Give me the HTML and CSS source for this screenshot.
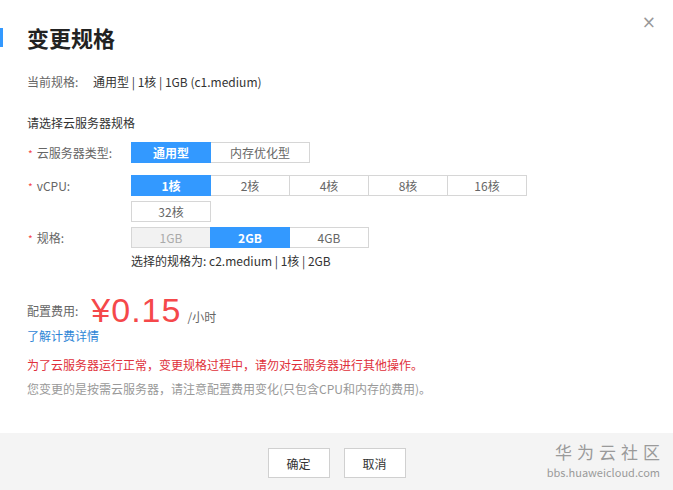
FILE: index.html
```html
<!DOCTYPE html>
<html lang="zh-CN">
<head>
  <meta charset="UTF-8">
  <title>变更规格</title>
  <link rel="stylesheet" href="styles.css">
</head>
<body>
<div class="dialog">
  <span class="close">&#215;</span>
  <div class="body">
    <h1 class="title">变更规格</h1>

    <div class="current">
      <span class="current-label">当前规格:</span>
      <span>通用型 | 1核 | 1GB (c1.medium)</span>
    </div>

    <div class="section">请选择云服务器规格</div>

    <div class="form">
      <div class="row">
        <div class="label"><i>*</i>云服务器类型:</div>
        <div class="opts">
          <span class="opt on">通用型</span>
          <span class="opt wide">内存优化型</span>
        </div>
      </div>

      <div class="row">
        <div class="label"><i>*</i>vCPU:</div>
        <div class="opts wrap">
          <span class="opt on">1核</span>
          <span class="opt">2核</span>
          <span class="opt">4核</span>
          <span class="opt">8核</span>
          <span class="opt">16核</span>
          <span class="opt">32核</span>
        </div>
      </div>

      <div class="row tight">
        <div class="label"><i>*</i>规格:</div>
        <div class="opts">
          <span class="opt off">1GB</span>
          <span class="opt on">2GB</span>
          <span class="opt">4GB</span>
        </div>
      </div>

      <div class="chosen">选择的规格为: c2.medium | 1核 | 2GB</div>
    </div>

    <div class="fee">
      <span class="fee-label">配置费用:</span>
      <span class="price">¥0.15</span>
      <span class="unit">/小时</span>
    </div>
    <a class="detail">了解计费详情</a>

    <p class="warn">为了云服务器运行正常，变更规格过程中，请勿对云服务器进行其他操作。</p>
    <p class="note">您变更的是按需云服务器，请注意配置费用变化(只包含CPU和内存的费用)。</p>
  </div>

  <div class="footer">
    <button class="btn">确定</button>
    <button class="btn">取消</button>
    <div class="mark">
      <div class="mark-cn">华为云社区</div>
      <div class="mark-en">bbs.huaweicloud.com</div>
    </div>
  </div>
</div>
</body>
</html>
```

FILE: styles.css
```css
body {
  margin: 0;
  background: #fff;
  font-family: "Noto Sans CJK SC", "Liberation Sans", sans-serif;
  font-size: 12px;
  color: #333;
}

.dialog {
  position: relative;
  width: 673px;
  height: 490px;
  display: flex;
  flex-direction: column;
  overflow: hidden;
}

.close {
  position: absolute;
  top: 12px;
  right: 17px;
  font-size: 17px;
  color: #999;
  font-family: "DejaVu Sans", sans-serif;
}

.body {
  flex: 1;
  padding: 26px 0 0 27px;
}

.title {
  position: relative;
  margin: 0;
  font-size: 22px;
  line-height: 22px;
  font-weight: bold;
  color: #222;
}

.title::before {
  content: '';
  position: absolute;
  left: -27px;
  top: 2px;
  width: 3px;
  height: 19px;
  background: #3399ff;
}

.current {
  margin-top: 26px;
  line-height: 16px;
  color: #333;
}

.current-label {
  color: #666;
  margin-right: 12px;
}

.section {
  margin-top: 25px;
  line-height: 16px;
}

.form {
  margin-top: 11px;
}

.row {
  display: flex;
  align-items: flex-start;
  margin-bottom: 11px;
}

.row.tight {
  margin-top: -6px;
  margin-bottom: 4px;
}

.label {
  width: 104px;
  flex: none;
  line-height: 21px;
  color: #666;
}

.label i {
  font-style: normal;
  color: #f5484a;
  font-size: 10px;
  margin: 0 4px 0 1px;
}

.opts {
  display: flex;
}

.opts.wrap {
  flex-wrap: wrap;
  width: 402px;
  row-gap: 5px;
}

.opt {
  box-sizing: border-box;
  width: 80px;
  height: 21px;
  line-height: 19px;
  border: 1px solid #d6d6d6;
  margin-right: -1px;
  text-align: center;
  color: #666;
  background: #fff;
}

.opt.wide {
  width: 100px;
}

.opt.on {
  background: #3399ff;
  border-color: #3399ff;
  color: #fff;
  font-weight: bold;
  position: relative;
}

.opt.off {
  background: #f2f2f2;
  color: #aaa;
}

.chosen {
  margin-left: 104px;
  line-height: 16px;
}

.fee {
  margin-top: 24px;
  display: flex;
  align-items: baseline;
}

.fee-label {
  align-self: center;
  color: #666;
  margin-right: 13px;
}

.price {
  font-family: "Liberation Sans", sans-serif;
  font-size: 34px;
  line-height: 34px;
  letter-spacing: 1px;
  color: #f5484a;
  margin-right: 6px;
}

.unit {
  color: #666;
}

.detail {
  display: block;
  margin-top: 1px;
  line-height: 16px;
  color: #2f86d6;
}

.warn {
  margin: 13px 0 0;
  line-height: 16px;
  color: #e0303a;
}

.note {
  margin: 8px 0 0;
  line-height: 16px;
  color: #999;
}

.footer {
  position: relative;
  height: 57px;
  background: #f4f4f4;
  display: flex;
  justify-content: center;
  align-items: flex-start;
  gap: 14px;
  padding-top: 15px;
  box-sizing: border-box;
}

.btn {
  width: 62px;
  height: 30px;
  border: 1px solid #d0d0d0;
  background: #fff;
  font-family: inherit;
  font-size: 12px;
  color: #333;
  padding: 0;
}

.mark {
  position: absolute;
  right: 13px;
  top: 9px;
  text-align: right;
  color: #9a9a9a;
}

.mark-cn {
  font-size: 17px;
  line-height: 20px;
  letter-spacing: 5px;
  margin-right: -5px;
}

.mark-en {
  font-size: 11px;
  line-height: 12px;
  margin-top: 4px;
}
```
